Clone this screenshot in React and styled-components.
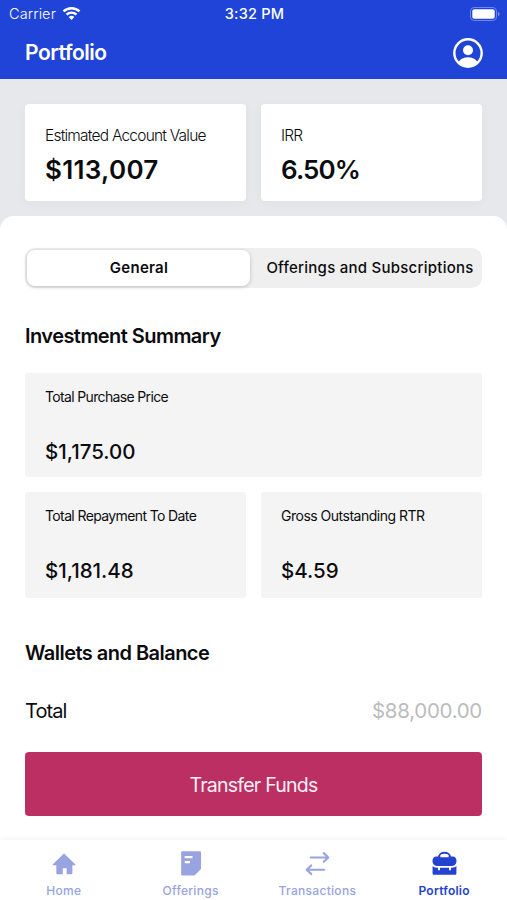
import { createGlobalStyle, styled } from 'styled-components';

const GlobalStyle = createGlobalStyle`
    * {
        box-sizing: border-box;
    }
    body {
        margin: 0;
        background: #fff;
        font-family: Inter, 'Liberation Sans', sans-serif;
        color: #0c0c0e;
    }
    p, h1, h2 {
        margin: 0;
    }
    button {
        border: 0;
        padding: 0;
        font-family: inherit;
        color: inherit;
    }
`;

const Screen = styled.div`
    height: 900px;
    display: flex;
    flex-direction: column;
    overflow: hidden;
    background: #e6e8eb;
`;

const Header = styled.header`
    height: 79px;
    flex-shrink: 0;
    background: #2044d8;
    color: #fff;
`;

const StatusBar = styled.div`
    height: 27px;
    padding: 0 7px 0 9px;
    display: grid;
    grid-template-columns: 1fr auto 1fr;
    align-items: center;
    svg {
        display: block;
    }
`;

const Carrier = styled.div`
    display: flex;
    align-items: center;
    gap: 6px;
`;

const Battery = styled.div`
    display: flex;
    justify-content: flex-end;
`;

const TitleBar = styled.div`
    height: 51px;
    padding: 0 24px 0 25px;
    display: flex;
    align-items: center;
    justify-content: space-between;
    svg {
        display: block;
    }
`;

const Text = styled.span`
    display: block;
    white-space: nowrap;
    font-size: ${({ $size }) => $size}px;
    line-height: ${({ $line }) => $line || 24}px;
    font-weight: ${({ $weight }) => $weight || 400};
    letter-spacing: ${({ $spacing }) => $spacing || 0}px;
`;

const ValueCards = styled.div`
    flex-shrink: 0;
    padding: 25px 25px 15px;
    display: grid;
    grid-template-columns: 1fr 1fr;
    gap: 15px;
`;

const ValueCard = styled.div`
    height: 97px;
    padding: 20px 20px 0;
    border-radius: 4px;
    background: #fff;
    box-shadow: 0 2px 12px rgba(60, 60, 80, 0.04);
`;

const Sheet = styled.main`
    flex: 1;
    padding: 32px 25px 0;
    border-radius: 14px 14px 0 0;
    background: #fff;
`;

const Segmented = styled.div`
    height: 40px;
    padding: 2px;
    display: flex;
    border-radius: 10px;
    background: #efeff0;
`;

const Segment = styled.button`
    width: ${({ $active }) => ($active ? '223px' : 'auto')};
    flex: ${({ $active }) => ($active ? 'none' : 1)};
    padding-left: ${({ $active }) => ($active ? '1px' : '10px')};
    display: flex;
    align-items: center;
    justify-content: center;
    border-radius: 8px;
    background: ${({ $active }) => ($active ? '#fff' : 'transparent')};
    box-shadow: ${({ $active }) => ($active ? '0 1px 4px rgba(0, 0, 0, 0.2)' : 'none')};
`;

const SectionTitle = styled.h2`
    margin-top: ${({ $top }) => $top}px;
    font-size: 20px;
    line-height: 26px;
    font-weight: 600;
    letter-spacing: ${({ $spacing }) => $spacing}px;
    white-space: nowrap;
`;

const SummaryGrid = styled.div`
    margin-top: 24px;
    display: grid;
    grid-template-columns: 1fr 1fr;
    grid-template-rows: 104px 106px;
    gap: 15px;
`;

const SummaryBox = styled.div`
    grid-column: ${({ $wide }) => ($wide ? '1 / -1' : 'auto')};
    padding: 12px 20px 0;
    border-radius: 3px;
    background: #f4f4f5;
`;

const Amount = styled.div`
    margin-top: 30px;
`;

const TotalRow = styled.div`
    margin-top: 31px;
    height: 28px;
    display: flex;
    align-items: center;
    justify-content: space-between;
`;

const Muted = styled.div`
    color: #bcbcbe;
`;

const TransferButton = styled.button`
    width: 100%;
    height: 64px;
    padding-top: 1px;
    margin-top: 27px;
    display: flex;
    align-items: center;
    justify-content: center;
    border-radius: 4px;
    background: #bb2f62;
    color: #fff0f6;
`;

const TabBar = styled.nav`
    height: 60px;
    flex-shrink: 0;
    display: grid;
    grid-template-columns: repeat(4, 1fr);
    background: #fff;
    box-shadow: 0 -2px 5px rgba(0, 0, 0, 0.04);
`;

const Tab = styled.div`
    padding: 10px 0 0 1px;
    display: flex;
    flex-direction: column;
    align-items: center;
    gap: 3px;
    color: ${({ $active }) => ($active ? '#2342cf' : '#98a3df')};
    svg {
        display: block;
    }
`;

const WifiIcon = () => (
    <svg width="19" height="15" viewBox="0 0 20 15" fill="none" stroke="#fff" strokeWidth="2.6">
        <path d="M1.6 5.3a12 12 0 0 1 16.8 0" />
        <path d="M4.8 8.7a7.4 7.4 0 0 1 10.4 0" />
        <path d="M10 14.4l-3-3.1a4.3 4.3 0 0 1 6 0z" fill="#fff" stroke="none" />
    </svg>
);

const BatteryIcon = () => (
    <svg width="30" height="14" viewBox="0 0 30 14">
        <rect x="0.5" y="0.5" width="26" height="13" rx="3.6" fill="none" stroke="#6f87e6" />
        <rect x="2.3" y="2.3" width="22.4" height="9.4" rx="2" fill="#fff" />
        <path d="M28 4.8c2 .8 2 3.6 0 4.4z" fill="#8398ea" />
    </svg>
);

const ProfileIcon = () => (
    <svg width="30" height="30" viewBox="0 0 30 30">
        <clipPath id="face">
            <circle cx="15" cy="15" r="14" />
        </clipPath>
        <circle cx="15" cy="15" r="13.7" fill="none" stroke="#fff" strokeWidth="2.4" />
        <circle cx="15" cy="12.3" r="5" fill="#fff" />
        <ellipse cx="15" cy="26.5" rx="10" ry="7.3" fill="#fff" clipPath="url(#face)" />
    </svg>
);

const HomeIcon = () => (
    <svg width="24" height="28" viewBox="0 0 26 28" fill="currentColor">
        <path d="M13 2.6l12.200 11.800c.4.5.2 1-.4 1h-2.700v9c0 .5-.3.8-.8.8h-5.400v-6.600h-4.200v6.600h-6.200c-.5 0-.8-.3-.8-.8v-9H1.300c-.6 0-.9-.5-.4-1z" />
    </svg>
);

const OfferingsIcon = () => (
    <svg width="26" height="28" viewBox="0 0 26 28">
        <path
            d="M4.500 1.200h17.200c.8 0 1.300.5 1.300 1.300V19l-6.500 6.500h-12c-.8 0-1.300-.5-1.300-1.300V2.500c0-.8.5-1.300 1.300-1.300z"
            fill="currentColor"
        />
        <path d="M6.700 7.200h7.800M6.700 12.200h5.300" stroke="#fff" strokeWidth="2.200" />
    </svg>
);

const TransactionsIcon = () => (
    <svg
        width="25"
        height="28"
        viewBox="0 0 26 28"
        fill="none"
        stroke="currentColor"
        strokeWidth="2.2"
        strokeLinecap="round"
        strokeLinejoin="round"
    >
        <path d="M6 7.200h18M19.500 2.700L24.200 7.200l-4.700 4.500" />
        <path d="M20 20H2M6.500 15.500L1.800 20l4.700 4.500" />
    </svg>
);

const PortfolioIcon = () => (
    <svg width="25" height="28" viewBox="0 0 26 28">
        <path d="M7.200 8.500V6.800a5.800 4.500 0 0 1 11.600 0v1.700" fill="none" stroke="currentColor" strokeWidth="1.900" />
        <path
            d="M4.500 6.200h17c2.500 0 4 2 4 4.600 0 3-1.800 5.200-4.500 5.200H5c-2.700 0-4.500-2.200-4.500-5.200 0-2.600 1.500-4.600 4-4.600z"
            fill="currentColor"
        />
        <path d="M8.300 7a4.900 3 0 0 1 9.400 0z" fill="#fff" />
        <path
            d="M.6 16.200c1.200 1.100 2.500 1.600 4.500 1.600h1.200v2.700h2v-2.700h9.400v2.700h2v-2.700h1.200c2 0 3.300-.5 4.500-1.600v7.300c0 1-.6 1.600-1.600 1.600H2.200c-1 0-1.600-.6-1.600-1.600z"
            fill="currentColor"
        />
    </svg>
);

const tabs = [
    { name: 'Home', icon: <HomeIcon />, spacing: 0.3 },
    { name: 'Offerings', icon: <OfferingsIcon />, spacing: 0.3 },
    { name: 'Transactions', icon: <TransactionsIcon />, spacing: 0.3 },
    { name: 'Portfolio', icon: <PortfolioIcon />, spacing: 0.25, active: true },
];

const summary = [
    { label: 'Total Purchase Price', amount: '$1,175.00', spacing: -0.65, wide: true },
    { label: 'Total Repayment To Date', amount: '$1,181.48', spacing: -0.62 },
    { label: 'Gross Outstanding RTR', amount: '$4.59', spacing: -0.5 },
];

export default function App() {
    return (
        <Screen>
            <GlobalStyle />
            <Header>
                <StatusBar>
                    <Carrier>
                        <Text $size={14.5} $weight={300} $spacing={0.1}>Carrier</Text>
                        <WifiIcon />
                    </Carrier>
                    <Text $size={14.5} $weight={550} $spacing={0.2}>3:32 PM</Text>
                    <Battery>
                        <BatteryIcon />
                    </Battery>
                </StatusBar>
                <TitleBar>
                    <Text as="h1" $size={21} $weight={600} $spacing={-0.48}>Portfolio</Text>
                    <ProfileIcon />
                </TitleBar>
            </Header>
            <ValueCards>
                <ValueCard>
                    <Text $size={15.5} $weight={300} $spacing={-0.78}>Estimated Account Value</Text>
                    <Text $size={26} $weight={600} $spacing={0.3} $line={44}>$113,007</Text>
                </ValueCard>
                <ValueCard>
                    <Text $size={15.5} $weight={300} $spacing={-0.78}>IRR</Text>
                    <Text $size={26} $weight={600} $spacing={-0.9} $line={44}>6.50%</Text>
                </ValueCard>
            </ValueCards>
            <Sheet>
                <Segmented>
                    <Segment $active>
                        <Text $size={15} $weight={600} $spacing={0.25}>General</Text>
                    </Segment>
                    <Segment>
                        <Text $size={15} $weight={500} $spacing={0.25}>Offerings and Subscriptions</Text>
                    </Segment>
                </Segmented>
                <SectionTitle $top={35} $spacing={-0.55}>Investment Summary</SectionTitle>
                <SummaryGrid>
                    {summary.map((item) => (
                        <SummaryBox key={item.label} $wide={item.wide}>
                            <Text $size={14} $spacing={item.spacing}>{item.label}</Text>
                            <Amount>
                                <Text $size={20.5} $weight={500} $line={26}>{item.amount}</Text>
                            </Amount>
                        </SummaryBox>
                    ))}
                </SummaryGrid>
                <SectionTitle $top={42} $spacing={-0.53}>Wallets and Balance</SectionTitle>
                <TotalRow>
                    <Text $size={20} $spacing={-0.9}>Total</Text>
                    <Muted>
                        <Text $size={20.5} $spacing={-0.3}>$88,000.00</Text>
                    </Muted>
                </TotalRow>
                <TransferButton>
                    <Text $size={19.5} $spacing={-0.75}>Transfer Funds</Text>
                </TransferButton>
            </Sheet>
            <TabBar>
                {tabs.map((tab) => (
                    <Tab key={tab.name} $active={tab.active}>
                        {tab.icon}
                        <Text $size={12} $line={20} $weight={tab.active ? 600 : 500} $spacing={tab.spacing}>
                            {tab.name}
                        </Text>
                    </Tab>
                ))}
            </TabBar>
        </Screen>
    );
}
